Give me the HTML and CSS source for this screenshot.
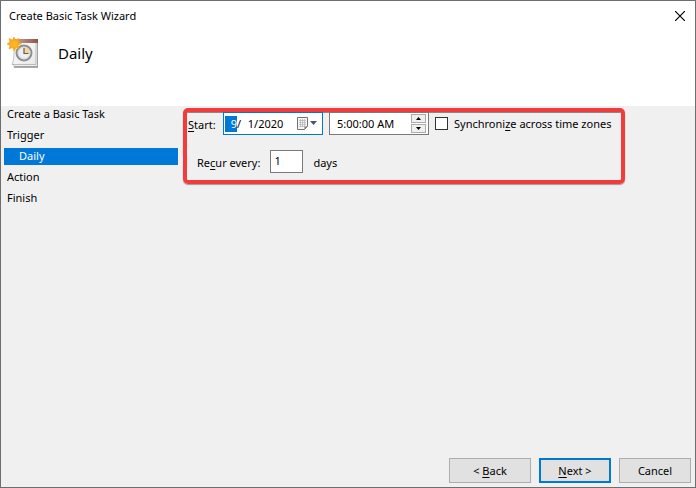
FILE: index.html
```html
<!DOCTYPE html>
<html lang="en">
<head>
  <meta charset="UTF-8" />
  <title>Create Basic Task Wizard</title>
  <link rel="stylesheet" href="styles.css">
</head>
<body>

  <div class="window">
    <div class="titlebar">
      <span>Create Basic Task Wizard</span>
      <button class="close" type="button" aria-label="Close">
        <svg width="10" height="10" viewBox="0 0 10 10"><path d="M0 0L10 10M10 0L0 10" stroke="#000" stroke-width="1.2" /></svg>
      </button>
    </div>

    <header class="header">
      <svg class="task-icon" width="32" height="32" viewBox="0 0 32 32">
        <defs>
          <linearGradient id="paper" x1="0" y1="0" x2="1" y2="1">
            <stop offset="0" stop-color="#fff" />
            <stop offset="1" stop-color="#e8e8e8" />
          </linearGradient>
          <linearGradient id="band" x1="0" y1="0" x2="1" y2="0">
            <stop offset="0" stop-color="#c9a698" />
            <stop offset="1" stop-color="#8d5648" />
          </linearGradient>
          <radialGradient id="sun">
            <stop offset="0" stop-color="#ffc02e" />
            <stop offset="1" stop-color="#f59a0c" />
          </radialGradient>
        </defs>
        <path d="M6 27H31V32H7Z" fill="#aaa" />
        <path d="M7 4H31V31H7Z" fill="#a3a3a3" />
        <path d="M7 5H30V30H7Z" fill="#eee" />
        <path d="M7 6H29V28.500H5Q7 24 7 19Z" fill="url(#paper)" stroke="#999" stroke-width="0.6" />
        <path d="M7 3H31V7H7Z" fill="url(#band)" />
        <circle cx="17" cy="17" r="7.500" fill="#f3f3f3" stroke="#8c8f92" stroke-width="2" />
        <circle cx="17" cy="17" r="5.800" fill="#edf0f3" stroke="#c5c8ca" stroke-width="0.6" />
        <path d="M17 17V11.300A5.700 5.700 0 0 1 22.700 17Z" fill="#f6d78c" />
        <path d="M17 12V17.500H21.500" fill="none" stroke="#5b5b60" stroke-width="1.2" />
        <path d="M7 1L8.500 4L12 2.500L11 6L14.500 7.500L11 9.500L12.500 13L9 11.500L7.500 15L5.500 11.500L2 13L3 9.500L0 8L3 6L2 2.500L5.500 4Z" fill="url(#sun)" stroke="#f8a51b" stroke-width="0.6" />
      </svg>
      <h1 class="page-title">Daily</h1>
    </header>

    <div class="body">
      <nav class="steps">
        <a class="step" href="#task">Create a Basic Task</a>
        <a class="step" href="#trigger">Trigger</a>
        <a class="step sub current" href="#daily" aria-current="step">Daily</a>
        <a class="step" href="#action">Action</a>
        <a class="step" href="#finish">Finish</a>
      </nav>

      <form class="schedule">
        <div class="row">
          <label class="start-label" for="month"><u>S</u>tart:</label>
          <div class="field date">
            <input class="month" id="month" type="text" value="9" aria-label="Month"><span>/</span>
            <input class="day" type="text" value="1" aria-label="Day"><span>/</span>
            <input class="year" type="text" value="2020" aria-label="Year">
            <button class="calendar" type="button" aria-label="Choose date">
              <svg width="20" height="13" viewBox="0 0 20 13">
                <path d="M0.500 0.500H10.500V9L7.500 12.500H0.500Z" fill="#f7f7f7" stroke="#77706e" />
                <path d="M2 3.500H9M2 5.500H9M2 7.500H9M2 9.500H7M3.500 2V10M5.500 2V10M7.500 2V10" stroke="#b4b7bd" stroke-width="0.8" />
                <path d="M7.500 12.500V9.500H10.500Z" fill="#777" />
                <path d="M13 4H20L16.500 8Z" fill="#42557d" />
              </svg>
            </button>
          </div>
          <div class="field time">
            <input class="time-input" type="text" value="5:00:00 AM" aria-label="Start time">
            <div class="spin">
              <button type="button" aria-label="Later"><svg width="5" height="3" viewBox="0 0 5 3"><path d="M0 3L2.500 0L5 3Z" /></svg></button>
              <button type="button" aria-label="Earlier"><svg width="5" height="3" viewBox="0 0 5 3"><path d="M0 0L2.500 3L5 0Z" /></svg></button>
            </div>
          </div>
          <input class="check" id="sync" type="checkbox">
          <label for="sync">Synchroni<u>z</u>e across time zones</label>
        </div>

        <div class="row recur">
          <label class="recur-text" for="days">Re<u>c</u>ur every:</label>
          <input class="days" id="days" type="text" value="1">
          <span class="recur-text">days</span>
        </div>
      </form>
    </div>

    <footer class="footer">
      <button class="btn" type="button">&lt; <u>B</u>ack</button>
      <button class="btn next" type="button"><u>N</u>ext &gt;</button>
      <button class="btn cancel" type="button">Cancel</button>
    </footer>
  </div>

</body>
</html>
```

FILE: styles.css
```css
* {
  box-sizing: border-box;
}

body {
  margin: 0;
  font-family: "Noto Sans", "Open Sans", sans-serif;
  font-size: 11px;
  line-height: 16px;
  color: #000;
}

input, button {
  margin: 0;
  padding: 0;
  border: none;
  border-radius: 0;
  background: none;
  font: inherit;
  color: inherit;
}

u {
  text-underline-offset: 2px;
}

.window {
  display: flex;
  flex-direction: column;
  min-height: 100vh;
  border: 1px solid #6e6e6e;
  background: #f0f0f0;
}

.titlebar {
  display: flex;
  align-items: center;
  justify-content: space-between;
  height: 30px;
  padding: 0 10px 0 8px;
  background: #fff;
}

.close {
  display: flex;
}

.header {
  display: flex;
  align-items: flex-start;
  gap: 19px;
  height: 75px;
  padding: 5px 6px;
  background: #fff;
}

.page-title {
  margin: 6px 0;
  font-size: 15px;
  font-weight: normal;
  line-height: 22px;
}

.body {
  display: flex;
  flex: 1;
  align-items: flex-start;
}

.steps {
  flex: none;
  width: 177px;
  padding-left: 3px;
}

.step {
  display: block;
  height: 17px;
  margin-bottom: 4px;
  padding-left: 3px;
  line-height: 15px;
  color: #000;
  text-decoration: none;
}

.sub {
  padding-left: 15px;
}

.current {
  background: #0078d7;
  color: #fff;
}

/* outlined settings */
.schedule {
  margin: 2px 0 0 5px;
  padding: 0 10px 7px 1px;
  border: 4px solid #f23c3c;
  border-radius: 5px;
  box-shadow: 0 1px 1px #999, inset 0 1px 0 #888;
}

.row {
  display: flex;
  align-items: center;
}

.start-label {
  width: 35px;
  padding-top: 2px;
}

.field {
  display: flex;
  align-items: center;
  width: 100px;
  height: 23px;
  border: 1px solid #7a7a7a;
  background: #fff;
}

.date {
  padding: 0 2px 0 1px;
  border-color: #0078d7;
}

.month {
  width: 12px;
  text-align: right;
  background: #0078d7;
  color: #fff;
}

.day {
  width: 13px;
  text-align: right;
}

.year {
  width: 28px;
}

.calendar {
  display: flex;
  margin-left: auto;
  padding-right: 3px;
}

.time {
  margin-left: 6px;
  padding: 0 2px 0 7px;
}

.time-input {
  flex: 1;
  min-width: 0;
}

.spin {
  display: grid;
  gap: 1px;
}

.spin button {
  display: flex;
  align-items: center;
  justify-content: center;
  width: 15px;
  height: 9px;
  border: 1px solid #acacac;
  background: #f0f0f0;
}

.check {
  appearance: none;
  width: 13px;
  height: 13px;
  margin: 0 6px;
  border: 1px solid #333;
  background: #fff;
}

.check:checked {
  background: #0078d7;
}

.recur {
  gap: 10px;
  padding: 15px 0 0 9px;
}

.recur-text {
  padding-top: 2px;
}

.days {
  width: 33px;
  height: 23px;
  padding: 0 3px 2px;
  border: 1px solid #7a7a7a;
  background: #fff;
}

.footer {
  display: flex;
  justify-content: flex-end;
  gap: 8px;
  padding: 0 4px 4px;
}

.btn {
  width: 82px;
  height: 25px;
  border: 1px solid #adadad;
  background: #e1e1e1;
}

.next {
  width: 72px;
  border: 2px solid #0078d7;
}

.cancel {
  width: 72px;
}
```
